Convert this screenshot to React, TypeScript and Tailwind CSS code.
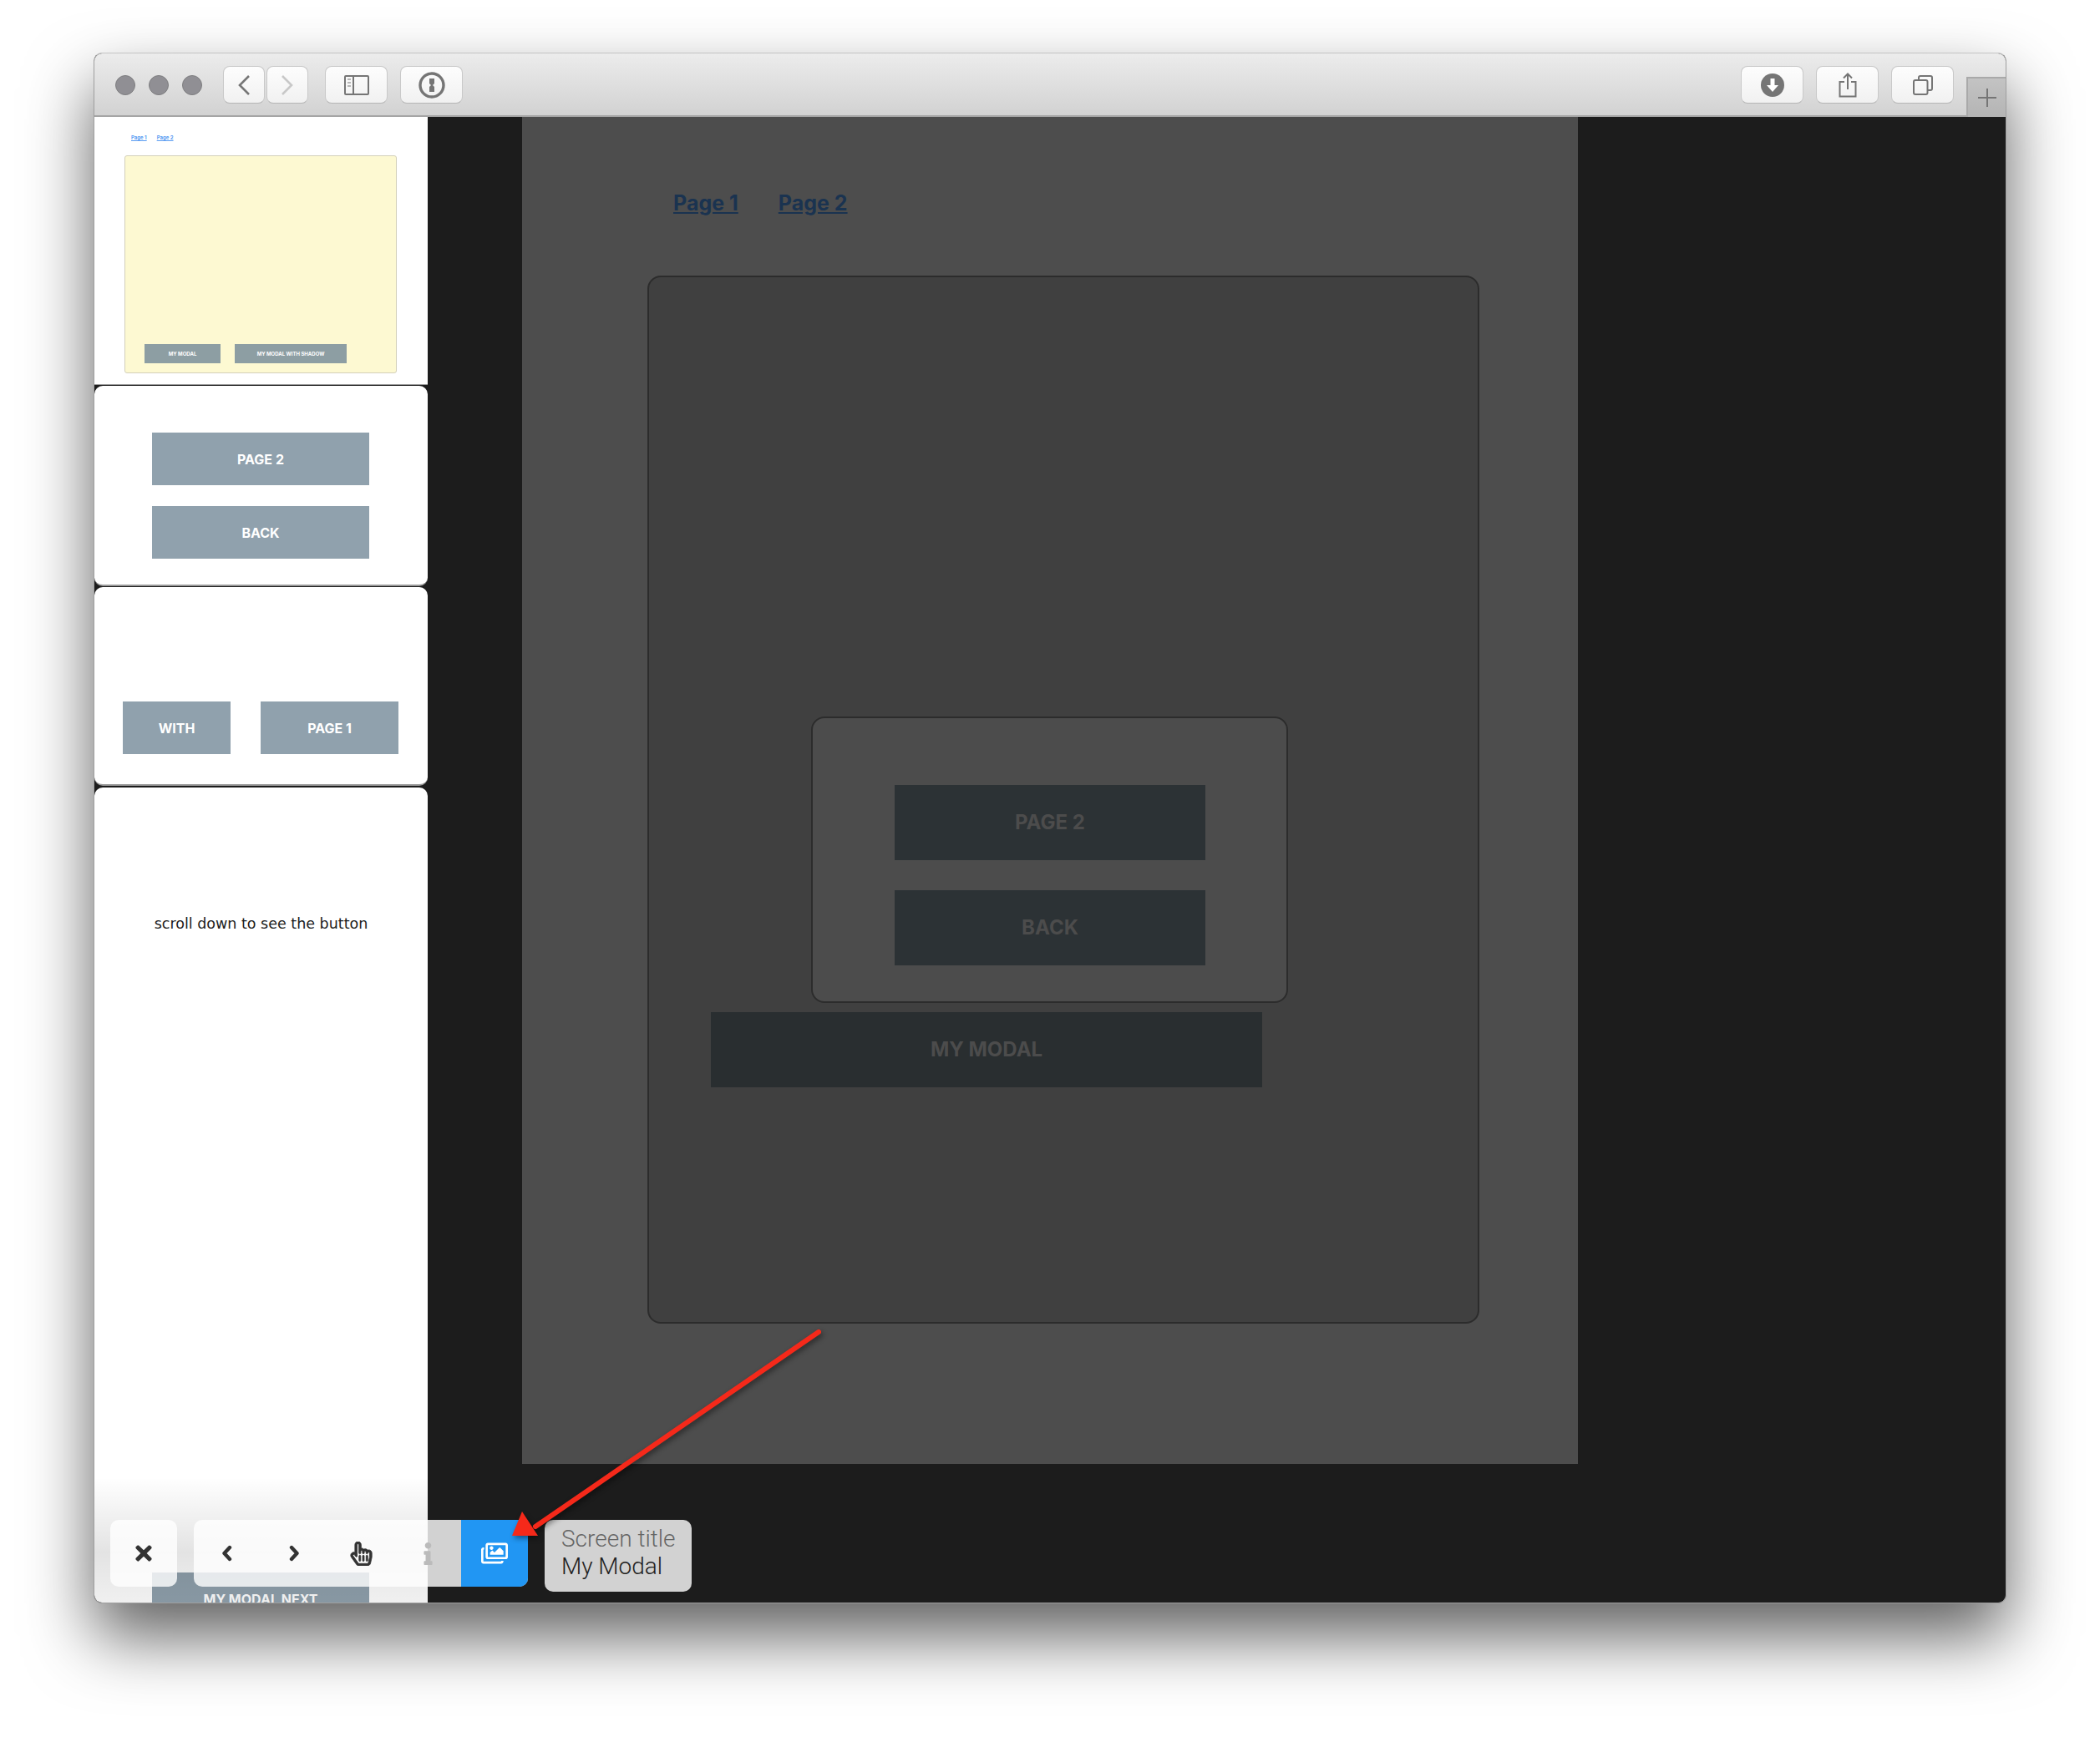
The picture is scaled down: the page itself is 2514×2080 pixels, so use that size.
import type { ReactNode } from "react";
import { FaInfo, FaRegHandPointer, FaRegImages, FaTimes } from "react-icons/fa";

function ChromeButton({ children, width = "w-[75px]" }: { children: ReactNode; width?: string }) {
  return (
    <div
      className={`${width} h-[45px] flex items-center justify-center rounded-[8px] border border-[#c9c9c9] border-b-[#b5b5b5] bg-gradient-to-b from-[#fdfdfd] to-[#f1f1f1]`}
    >
      {children}
    </div>
  );
}

function TitleBar() {
  return (
    <div className="h-[76px] shrink-0 flex items-start justify-between bg-gradient-to-b from-[#ececec] to-[#d2d2d2] border-b-2 border-[#a5a5a5]">
      <div className="flex items-center h-[45px] mt-[15px] pl-[25px]">
        <div className="flex gap-4">
          {[0, 1, 2].map((i) => (
            <span key={i} className="w-6 h-6 rounded-full bg-[#908f94] border border-[#7e7e80]" />
          ))}
        </div>
        <div className="flex gap-[2px] ml-[25px]">
          <ChromeButton width="w-[50px]">
            <svg width="18" height="26" viewBox="0 0 18 26" fill="none" stroke="#767676" strokeWidth="2.6">
              <path d="M15 2 4 13l11 11" />
            </svg>
          </ChromeButton>
          <ChromeButton width="w-[50px]">
            <svg width="18" height="26" viewBox="0 0 18 26" fill="none" stroke="#c8c8c8" strokeWidth="2.6">
              <path d="M3 2l11 11L3 24" />
            </svg>
          </ChromeButton>
        </div>
        <div className="ml-[20px]">
          <ChromeButton>
            <svg width="30" height="24" viewBox="0 0 30 24" fill="none" stroke="#757575" strokeWidth="2">
              <rect x="1" y="1" width="28" height="22" rx="1" />
              <path d="M11 1v22" />
              <path d="M4 5h4M4 9h4M4 13h4" strokeWidth="1.6" stroke="#a0a0a0" />
            </svg>
          </ChromeButton>
        </div>
        <div className="ml-[15px]">
          <ChromeButton>
            <svg width="32" height="32" viewBox="0 0 32 32">
              <circle cx="16" cy="16" r="14" fill="none" stroke="#757575" strokeWidth="3.4" />
              <path d="M13 8h6v6l-2 2 2 2v6h-6v-6l2-2-2-2z" fill="#757575" />
            </svg>
          </ChromeButton>
        </div>
      </div>
      <div className="flex items-start h-full">
        <div className="flex gap-[15px] mt-[15px]">
          <ChromeButton>
            <svg width="28" height="28" viewBox="0 0 28 28">
              <circle cx="14" cy="14" r="14" fill="#757575" />
              <path d="M11.5 6h5v8H21l-7 8-7-8h4.500z" fill="#fff" />
            </svg>
          </ChromeButton>
          <ChromeButton>
            <svg width="22" height="30" viewBox="0 0 22 30" fill="none" stroke="#757575" strokeWidth="2">
              <path d="M7 11H1.500v17.500h19V11H15" />
              <path d="M11 20V1.500M6 6.500l5-5 5 5" />
            </svg>
          </ChromeButton>
          <ChromeButton>
            <svg width="24" height="24" viewBox="0 0 24 24" fill="none" stroke="#757575" strokeWidth="2">
              <rect x="1" y="6" width="16.500" height="17" rx="2" />
              <path d="M7 6V3a2 2 0 0 1 2-2h12a2 2 0 0 1 2 2v13a2 2 0 0 1-2 2h-3" />
            </svg>
          </ChromeButton>
        </div>
        <div className="ml-[15px] mt-[28px] w-[47px] h-[48px] flex items-center justify-center bg-gradient-to-b from-[#c3c3c3] to-[#b4b4b4] border-l-2 border-t-2 border-[#a9a9a9]">
          <svg width="22" height="22" viewBox="0 0 22 22" stroke="#757575" strokeWidth="2">
            <path d="M11 0v22M0 11h22" />
          </svg>
        </div>
      </div>
    </div>
  );
}

function SideButton({ label, width = "w-[260px]" }: { label: string; width?: string }) {
  return (
    <div
      className={`${width} h-[63px] shrink-0 flex items-center justify-center bg-[#90a1ad] text-white text-[16px] font-bold font-['Inter',sans-serif]`}
    >
      {label}
    </div>
  );
}

function Thumbnail() {
  return (
    <div className="h-[321px] shrink-0 bg-white border-b border-[#999] pl-[36px] relative font-['Inter',sans-serif]">
      <div className="h-[46px] pl-[8px] pt-[21px] flex gap-[12px] text-[6px] leading-[8px] font-bold text-[#5b9df2] underline">
        <span>Page 1</span>
        <span>Page 2</span>
      </div>
      <div className="w-[326px] h-[261px] rounded-[3px] bg-[#fdf9d2] border border-[#d3d0bb] pt-[225px] pl-[23px] flex gap-[17px]">
        <div className="w-[91px] h-[23px] flex items-center justify-center bg-[#8d9ea3] text-white text-[6px] font-bold">
          MY MODAL
        </div>
        <div className="w-[134px] h-[23px] flex items-center justify-center bg-[#8d9ea3] text-white text-[6px] font-bold">
          MY MODAL WITH SHADOW
        </div>
      </div>
    </div>
  );
}

function Sidebar() {
  return (
    <div className="w-[399px] shrink-0 flex flex-col bg-[#1c1c1c]">
      <Thumbnail />
      <div className="mt-[1px] h-[240px] shrink-0 rounded-[10px] bg-white border-b-2 border-[#999] pt-[56px] pl-[69px] flex flex-col gap-[25px]">
        <SideButton label="PAGE 2" />
        <SideButton label="BACK" />
      </div>
      <div className="mt-[1px] h-[238px] shrink-0 rounded-[10px] bg-white border-b-2 border-[#999] pt-[137px] pl-[34px] flex gap-[36px]">
        <SideButton label="WITH" width="w-[129px]" />
        <SideButton label="PAGE 1" width="w-[165px]" />
      </div>
      <div className="mt-[2px] flex-1 min-h-0 overflow-hidden rounded-t-[10px] bg-white flex flex-col items-center">
        <p className="mt-[151px] text-[17.500px] leading-6 text-[#1d1d1d] font-['DejaVu_Sans',sans-serif]">
          scroll down to see the button
        </p>
        <div className="mt-[765px] ml-[-1px] w-[260px] h-[63px] shrink-0 flex items-start justify-center pt-[20px] bg-[#90a1ad] text-white text-[16px] font-bold font-['Inter',sans-serif]">
          MY MODAL NEXT
        </div>
      </div>
    </div>
  );
}

function DarkButton({ label, width = "w-[372px]", bg = "bg-[#2c3235]" }: { label: string; width?: string; bg?: string }) {
  return (
    <div className={`${width} ${bg} h-[90px] shrink-0 flex items-center justify-center text-[#4c4c4c] text-[24px] font-bold`}>
      {label}
    </div>
  );
}

function PagePreview() {
  return (
    <div className="ml-[113px] w-[1264px] h-[1613px] bg-[#4d4d4d] pl-[150px] font-['Inter',sans-serif]">
      <div className="h-[190px] pl-[31px] pt-[85px] flex gap-[48px] text-[25px] leading-9 font-bold text-[#1a3350] underline">
        <span>Page 1</span>
        <span>Page 2</span>
      </div>
      <div className="w-[996px] h-[1255px] rounded-[16px] bg-[#404040] border-2 border-[#2c2c2c] pt-[526px]">
        <div className="ml-[194px] w-[571px] h-[343px] rounded-[16px] bg-[#4c4c4c] border-2 border-[#2c2c2c] pt-[80px] pl-[98px] flex flex-col gap-[36px]">
          <DarkButton label="PAGE 2" />
          <DarkButton label="BACK" />
        </div>
        <div className="ml-[74px] mt-[11px]">
          <DarkButton label="MY MODAL" width="w-[660px]" bg="bg-[#292e30]" />
        </div>
      </div>
    </div>
  );
}

function Chevron({ path }: { path: string }) {
  return (
    <svg width="14" height="20" viewBox="0 0 14 20" fill="none" stroke="#333" strokeWidth="4.4" strokeLinecap="round" strokeLinejoin="round">
      <path d={path} />
    </svg>
  );
}

function Toolbar() {
  return (
    <div className="absolute left-[19px] top-[1756px] flex items-start gap-[20px]">
      <div className="w-[80px] h-[80px] flex items-center justify-center rounded-[10px] bg-white/80 text-[#333]">
        <FaTimes size={28} />
      </div>
      <div className="flex h-[80px] rounded-[10px] overflow-hidden bg-white/80 text-[#333]">
        <div className="w-[80px] flex items-center justify-center">
          <Chevron path="M10 3 3.500 10 10 17" />
        </div>
        <div className="w-[80px] flex items-center justify-center">
          <Chevron path="M4 3l6.500 7L4 17" />
        </div>
        <div className="w-[80px] flex items-center justify-center">
          <FaRegHandPointer size={29} stroke="#333" strokeWidth={14} />
        </div>
        <div className="w-[80px] flex items-center justify-center text-[#bbb]">
          <FaInfo size={27} />
        </div>
        <div className="w-[80px] flex items-center justify-center bg-[#2196f3] text-white">
          <FaRegImages size={32} />
        </div>
      </div>
      <div className="w-[176px] h-[86px] rounded-[10px] bg-white/80 pl-[20px] pt-[6px] font-['Roboto',sans-serif] font-light text-[28px] leading-[33px]">
        <div className="text-[#666]">Screen title</div>
        <div className="text-[#222]">My Modal</div>
      </div>
    </div>
  );
}

export default function App() {
  return (
    <div className="w-[2514px] h-[2080px] bg-white pl-[112px] pt-[63px]">
      <div className="relative w-[2290px] h-[1857px] flex flex-col overflow-hidden rounded-[10px] border border-[#9f9f9f] border-t-[#c4c4c4] bg-[#1c1c1c] shadow-[0_40px_80px_rgba(0,0,0,0.62)]">
        <TitleBar />
        <div className="flex flex-1 min-h-0">
          <Sidebar />
          <PagePreview />
        </div>
        {/* bottom fade behind the toolbar */}
        <div className="absolute left-0 bottom-0 w-[399px] h-[150px] bg-[linear-gradient(to_bottom,rgba(0,0,0,0),rgba(0,0,0,0.11)_60%,rgba(0,0,0,0.06))]" />
        <Toolbar />
        {/* red annotation arrow */}
        <svg className="absolute left-[500px] top-[1520px] drop-shadow-[2px_3px_3px_rgba(0,0,0,0.45)]" width="400" height="270" viewBox="0 0 400 270">
          <path d="M367 11 28 244" stroke="#f5291a" strokeWidth="6" strokeLinecap="round" fill="none" />
          <path d="M12 226 0 255h31z" fill="#f5291a" />
        </svg>
      </div>
    </div>
  );
}
